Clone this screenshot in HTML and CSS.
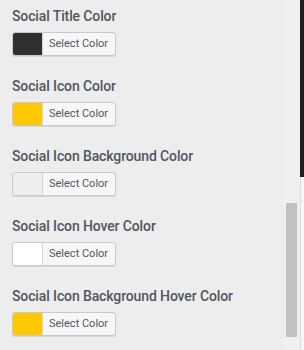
FILE: index.html
```html
<!DOCTYPE html>
<html lang="en">
<head>
    <meta charset="UTF-8">
    <meta name="viewport" content="width=device-width, initial-scale=1.0">
    <title>Social Colors</title>
    <link rel="stylesheet" href="styles.css">
</head>
<body>
    <div class="layout">
        <main class="panel">
            <div class="field">
                <h3>Social Title Color</h3>
                <button class="color-btn"><span class="swatch dark"></span><span class="label">Select Color</span></button>
            </div>
            <div class="field">
                <h3>Social Icon Color</h3>
                <button class="color-btn"><span class="swatch yellow"></span><span class="label">Select Color</span></button>
            </div>
            <div class="field">
                <h3>Social Icon Background Color</h3>
                <button class="color-btn"><span class="swatch light"></span><span class="label">Select Color</span></button>
            </div>
            <div class="field">
                <h3>Social Icon Hover Color</h3>
                <button class="color-btn"><span class="swatch white"></span><span class="label">Select Color</span></button>
            </div>
            <div class="field">
                <h3>Social Icon Background Hover Color</h3>
                <button class="color-btn"><span class="swatch yellow"></span><span class="label">Select Color</span></button>
            </div>
        </main>

        <div class="scroll-track">
            <div class="scroll-thumb"></div>
        </div>

        <div class="edge">
            <div class="edge-dark"></div>
        </div>
    </div>
</body>
</html>
```

FILE: styles.css
```css
* {
    margin: 0;
    padding: 0;
    box-sizing: border-box;
    font-family: Roboto, 'Liberation Sans', sans-serif;
}

body {
    background: #ededed;
    overflow: hidden;
}

.layout {
    display: flex;
    height: 350px;
}

.panel {
    flex: 1;
    padding-left: 12px;
}

.field {
    height: 70px;
    padding-top: 7px;
}

.field h3 {
    font-size: 14px;
    line-height: 18px;
    font-weight: 500;
    letter-spacing: -0.12px;
    color: #50575e;
    margin-bottom: 7px;
    white-space: nowrap;
}

.color-btn {
    display: flex;
    align-items: stretch;
    width: 104px;
    height: 24px;
    border: 1px solid #c9c9c9;
    border-radius: 3px;
    background: #f7f7f7;
    overflow: hidden;
    box-shadow: 0 1px 0 #d6d6d6;
}

.swatch {
    width: 30px;
    border-right: 1px solid #d4d4d4;
}

.swatch.dark { background: #303030; }
.swatch.yellow { background: #ffc800; }
.swatch.light { background: #eeeeee; }
.swatch.white { background: #ffffff; }

.label {
    flex: 1;
    font-size: 11px;
    line-height: 22px;
    color: #50575e;
    text-align: left;
    padding-left: 6px;
}

.scroll-track {
    width: 16px;
    background: #f0f0f0;
    padding: 203px 3px 0 2px;
}

.scroll-thumb {
    height: 134px;
    background: #c1c1c1;
}

.edge {
    width: 4px;
    background: #f7f7f7;
    border-left: 1px solid #dcdcdc;
}

.edge-dark {
    height: 177px;
    background: #1e1e1e;
    margin-left: -1px;
}
```
